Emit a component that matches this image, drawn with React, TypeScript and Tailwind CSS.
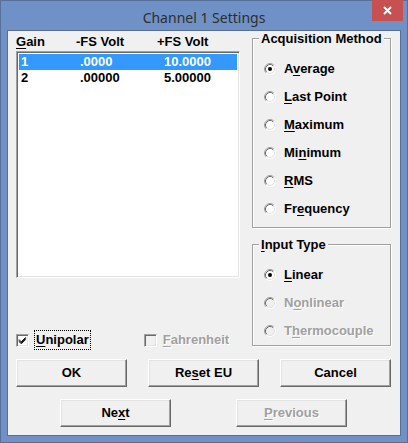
import React from 'react';

const ui = { fontFamily: '"Liberation Sans", Arial, sans-serif' };

function Radio({ checked = false, disabled = false }: { checked?: boolean; disabled?: boolean }) {
  return (
    <svg width="12" height="12" viewBox="0 0 12 12" className="shrink-0">
      <circle cx="6" cy="6" r="5" fill={disabled ? '#f0f0f0' : '#fff'} />
      <path d="M2.11 9.89 A5.5 5.5 0 0 1 9.89 2.11" fill="none" stroke="#a0a0a0" />
      <path d="M9.89 2.11 A5.5 5.5 0 0 1 2.11 9.89" fill="none" stroke="#fff" />
      <path d="M2.82 9.18 A4.5 4.5 0 0 1 9.18 2.82" fill="none" stroke="#696969" />
      <path d="M9.18 2.82 A4.5 4.5 0 0 1 2.82 9.18" fill="none" stroke="#e3e3e3" />
      {checked && <circle cx="6" cy="6" r="2" fill={disabled ? '#a0a0a0' : '#000'} />}
    </svg>
  );
}

function Check({ checked = false, disabled = false }: { checked?: boolean; disabled?: boolean }) {
  return (
    <div
      className={`w-[13px] h-[13px] shrink-0 border border-t-[#a0a0a0] border-l-[#a0a0a0] border-b-white border-r-white shadow-[inset_1px_1px_0_#696969,inset_-1px_-1px_0_#e3e3e3] ${
        disabled ? 'bg-[#f0f0f0]' : 'bg-white'
      }`}
    >
      {checked && (
        <svg width="11" height="11" viewBox="0 0 11 11">
          <path d="M2 4.5 L4.3 6.8 L8.8 2.3 M2 5.5 L4.3 7.8 L8.8 3.3 M2 6.5 L4.3 8.8 L8.8 4.3" fill="none" stroke="#000" strokeWidth="1" />
        </svg>
      )}
    </div>
  );
}

function Label({ text, u, disabled = false }: { text: string; u: number; disabled?: boolean }) {
  return (
    <span className={disabled ? 'text-[#a0a0a0] [text-shadow:1px_1px_0_#fff]' : 'text-black'}>
      {text.slice(0, u)}
      <u className="underline-offset-[2px]">{text[u]}</u>
      {text.slice(u + 1)}
    </span>
  );
}

function Button({ text, u, disabled = false }: { text: string; u: number; disabled?: boolean }) {
  return (
    <div className="w-[111px] h-[28px] flex items-center justify-center bg-[#f0f0f0] border border-t-white border-l-white border-b-[#696969] border-r-[#696969] shadow-[inset_-1px_-1px_0_#a0a0a0,inset_1px_1px_0_#e3e3e3] text-[13px] font-bold">
      {u < 0 ? <span>{text}</span> : <Label text={text} u={u} disabled={disabled} />}
    </div>
  );
}

function Group({ title, u, h, items }: { title: string; u: number; h: string; items: { text: string; u: number; checked?: boolean; disabled?: boolean }[] }) {
  return (
    <fieldset className={`${h} w-[139px] border border-[#a0a0a0] shadow-[inset_1px_1px_0_#fff,1px_1px_0_#fff]`}>
      <legend className="ml-[6px] px-[2px] bg-[#f0f0f0] text-[13px] font-bold leading-[15px]">
        {u < 0 ? title : <Label text={title} u={u} />}
      </legend>
      <div className="flex flex-col gap-[14px] pl-[11px] pt-[16px]">
        {items.map((it) => (
          <div key={it.text} className="flex items-center gap-[8px] h-[14px] text-[13px] font-bold">
            <Radio checked={it.checked} disabled={it.disabled} />
            <Label text={it.text} u={it.u} disabled={it.disabled} />
          </div>
        ))}
      </div>
    </fieldset>
  );
}

export default function App() {
  const rows = [
    { g: '1', lo: '.0000', hi: '10.0000' },
    { g: '2', lo: '.00000', hi: '5.00000' },
  ];

  return (
    <div className="w-[408px] h-[443px] flex flex-col bg-[#6f91c6] border border-[#56709b] px-[6px] pb-[6px]" style={ui}>
      <div className="relative h-[29px] flex items-center justify-center">
        <span className="text-[14px] text-[#2e2e2e] pt-[3px]" style={{ fontFamily: '"Noto Sans", sans-serif' }}>
          Channel 1 Settings
        </span>
        <div className="absolute right-[-2px] top-[-1px] w-[31px] h-[21px] bg-[#c75050] flex items-center justify-center">
          <svg width="9" height="9" viewBox="0 0 9 9">
            <path d="M1 1 L8 8 M8 1 L1 8" stroke="#fff" strokeWidth="2" />
          </svg>
        </div>
      </div>

      <div className="flex-1 border border-[#56709b] bg-[#f0f0f0] flex flex-col">
        <div className="flex h-[320px]">
          <div className="ml-[8px] w-[224px] flex flex-col">
            <div className="h-[20px] flex items-start pt-[3px] text-[13px] font-bold leading-[15px]">
              <span className="w-[60px]">
                <u className="underline-offset-[2px]">G</u>ain
              </span>
              <span className="w-[81px]">-FS Volt</span>
              <span>+FS Volt</span>
            </div>
            <div className="h-[227px] bg-white border border-t-[#a0a0a0] border-l-[#a0a0a0] border-b-white border-r-white shadow-[inset_1px_1px_0_#696969,inset_-1px_-1px_0_#e3e3e3] p-[2px]">
              {rows.map((r, i) => (
                <div
                  key={r.g}
                  className={`h-[16px] flex items-center pl-[2px] text-[13px] font-bold ${i === 0 ? 'bg-[#3399ff] text-white' : 'text-black'}`}
                >
                  <span className="w-[59px]">{r.g}</span>
                  <span className="w-[84px]">{r.lo}</span>
                  <span>{r.hi}</span>
                </div>
              ))}
            </div>
            <div className="mt-[52px] flex items-center text-[13px] font-bold">
              <Check checked />
              <span className="ml-[5px] h-[20px] px-[1px] flex items-center border border-dotted border-black">
                <Label text="Unipolar" u={0} />
              </span>
              <div className="ml-[53px] flex items-center gap-[6px]">
                <Check disabled />
                <Label text="Fahrenheit" u={0} disabled />
              </div>
            </div>
          </div>

          <div className="ml-[12px] flex flex-col gap-[9px]">
            <Group
              title="Acquisition Method"
              u={-1}
              h="h-[197px]"
              items={[
                { text: 'Average', u: 1, checked: true },
                { text: 'Last Point', u: 0 },
                { text: 'Maximum', u: 0 },
                { text: 'Minimum', u: 2 },
                { text: 'RMS', u: 0 },
                { text: 'Frequency', u: 2 },
              ]}
            />
            <Group
              title="Input Type"
              u={0}
              h="h-[109px]"
              items={[
                { text: 'Linear', u: 0, checked: true },
                { text: 'Nonlinear', u: 1, disabled: true },
                { text: 'Thermocouple', u: 1, disabled: true },
              ]}
            />
          </div>
        </div>

        <div className="mt-[8px] ml-[8px] flex gap-[21px]">
          <Button text="OK" u={-1} />
          <Button text="Reset EU" u={2} />
          <Button text="Cancel" u={-1} />
        </div>
        <div className="mt-[12px] ml-[52px] flex gap-[65px]">
          <Button text="Next" u={2} />
          <Button text="Previous" u={0} disabled />
        </div>
      </div>
    </div>
  );
}
